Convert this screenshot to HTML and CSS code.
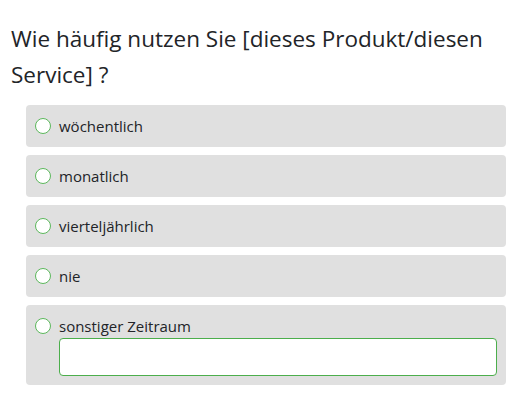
FILE: index.html
```html
<!DOCTYPE html>
<html lang="de">
<head>
<meta charset="utf-8">
<link rel="stylesheet" href="styles.css">
</head>
<body>
<div class="question">
  <h2 class="title">Wie häufig nutzen Sie [dieses Produkt/diesen Service] ?</h2>
  <div class="options">
    <label class="option"><span class="row"><span class="radio"></span><span class="text">wöchentlich</span></span></label>
    <label class="option"><span class="row"><span class="radio"></span><span class="text">monatlich</span></span></label>
    <label class="option"><span class="row"><span class="radio"></span><span class="text">vierteljährlich</span></span></label>
    <label class="option"><span class="row"><span class="radio"></span><span class="text">nie</span></span></label>
    <label class="option"><span class="row"><span class="radio"></span><span class="text">sonstiger Zeitraum</span></span><span class="other"><span class="input"></span></span></label>
  </div>
</div>
</body>
</html>
```
FILE: styles.css
```css
html, body {
  margin: 0;
  padding: 0;
  background: #ffffff;
}
body {
  font-family: "Open Sans", "Noto Sans", sans-serif;
  color: #222428;
}
.question {
  padding: 21px 24px 0 11px;
}
.title {
  margin: 0;
  font-size: 22.5px;
  font-weight: 400;
  line-height: 36px;
}
.options {
  display: flex;
  flex-direction: column;
  gap: 8px;
  margin: 12px 0 0 15px;
}
.option {
  display: flex;
  flex-direction: column;
  background: #e0e0e0;
  border-radius: 4px;
  padding: 9px 9px 9px 9px;
}
.row {
  display: flex;
  align-items: center;
  gap: 8px;
  height: 24px;
}
.radio {
  width: 16px;
  height: 16px;
  box-sizing: border-box;
  border: 1.5px solid #5cb85c;
  border-radius: 50%;
  background: #ffffff;
  flex: none;
}
.text {
  font-size: 15px;
  line-height: 24px;
}
.other {
  display: block;
  padding-left: 24px;
}
.input {
  display: block;
  height: 38px;
  box-sizing: border-box;
  border: 1px solid #4cae4c;
  border-radius: 4px;
  background: #ffffff;
}
```
